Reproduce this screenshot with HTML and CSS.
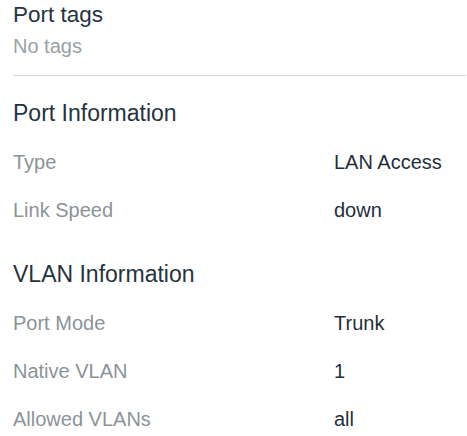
FILE: index.html
```html
<!DOCTYPE html>
<html lang="en">
<head>
<meta charset="utf-8">
<title>Port details</title>
<link rel="stylesheet" href="styles.css">
</head>
<body>
<div class="panel">
  <section class="tags">
    <h2 class="tags-title">Port tags</h2>
    <p class="tags-empty">No tags</p>
  </section>
  <hr class="divider">
  <section class="info">
    <h3 class="info-title">Port Information</h3>
    <dl class="info-list">
      <div class="info-row"><dt>Type</dt><dd>LAN Access</dd></div>
      <div class="info-row"><dt>Link Speed</dt><dd>down</dd></div>
    </dl>
  </section>
  <section class="info info-vlan">
    <h3 class="info-title">VLAN Information</h3>
    <dl class="info-list">
      <div class="info-row"><dt>Port Mode</dt><dd>Trunk</dd></div>
      <div class="info-row"><dt>Native VLAN</dt><dd>1</dd></div>
      <div class="info-row"><dt>Allowed VLANs</dt><dd>all</dd></div>
    </dl>
  </section>
</div>
</body>
</html>
```

FILE: styles.css
```css
html, body {
  margin: 0;
  padding: 0;
  background: #ffffff;
}

body {
  font-family: "Liberation Sans", Arial, sans-serif;
  color: #24343e;
}

.panel {
  padding: 1px 1px 0 13px;
}

.tags-title {
  margin: 0;
  font-size: 22.5px;
  line-height: 28px;
  font-weight: normal;
  color: #24343e;
}

.tags-empty {
  margin: 4px 0 0;
  font-size: 20px;
  line-height: 26px;
  color: #9aa1a6;
}

.divider {
  margin: 16px 0 0;
  border: 0;
  border-top: 1px solid #d9d9d9;
  height: 0;
}

.info {
  margin-top: 23px;
}

.info-vlan {
  margin-top: 26px;
}

.info-title {
  margin: 0 0 11px;
  font-size: 23px;
  line-height: 28px;
  font-weight: normal;
  color: #24343e;
}

.info-list {
  margin: 0;
}

.info-row {
  display: grid;
  grid-template-columns: 321px 1fr;
  height: 48px;
  align-items: center;
  font-size: 20px;
  line-height: 24px;
}

.info-row dt {
  color: #8b9399;
}

.info-row dd {
  margin: 0;
  color: #1f2f39;
}
```
